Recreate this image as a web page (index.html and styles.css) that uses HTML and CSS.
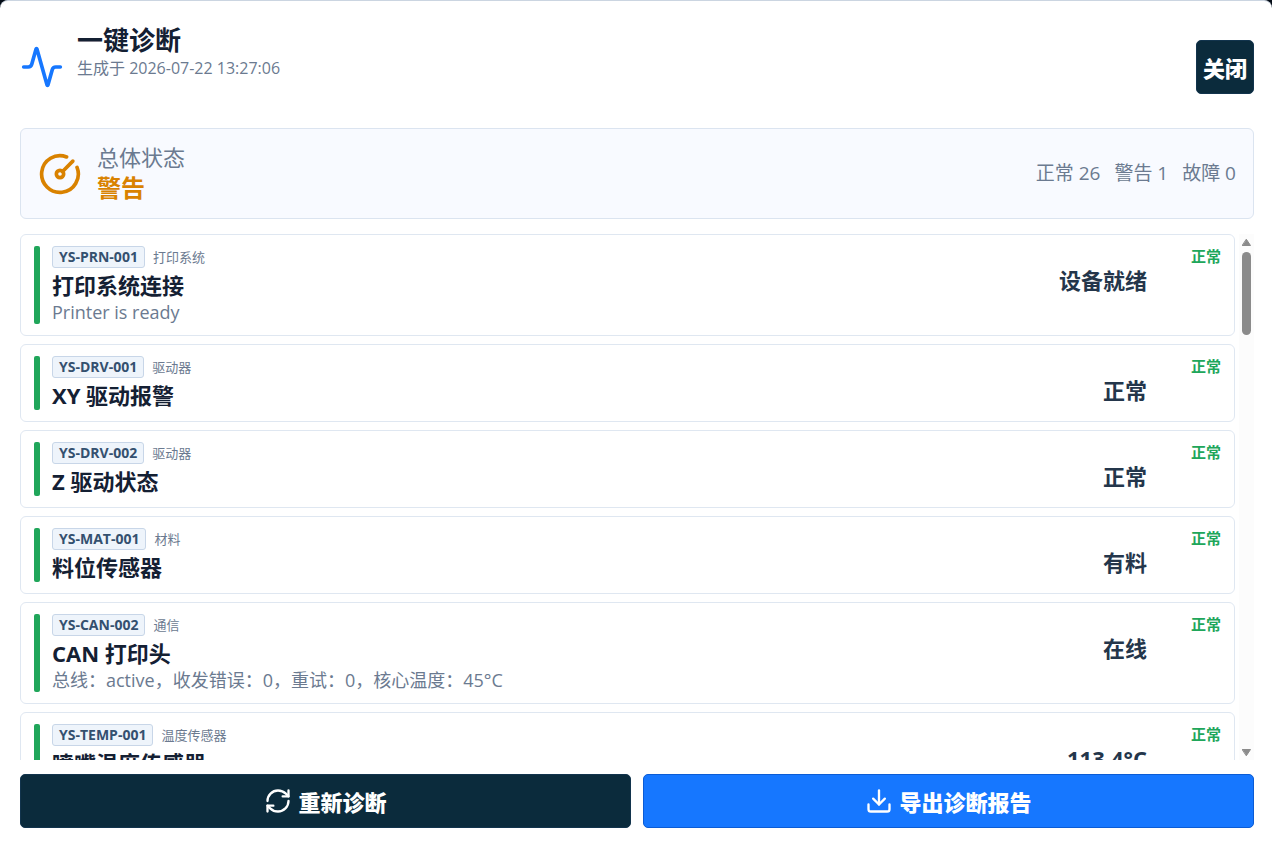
FILE: index.html
```html
<!DOCTYPE html>
<html lang="zh-CN">

<head>
  <meta charset="UTF-8" />
  <meta name="viewport" content="width=device-width, initial-scale=1.0" />
  <title>一键诊断</title>
  <link rel="stylesheet" href="styles.css">
</head>

<body>
  <div class="dialog" role="dialog" aria-labelledby="dialog-title">
    <header class="dialog-header">
      <svg class="icon-lg" viewBox="0 0 24 24">
        <path d="M22 12h-2.48a2 2 0 0 0-1.93 1.46l-2.35 8.36a.25.25 0 0 1-.48 0L9.24 2.18a.25.25 0 0 0-.48 0l-2.35 8.36A2 2 0 0 1 4.49 12H2" />
      </svg>
      <div class="heading">
        <h1 id="dialog-title">一键诊断</h1>
        <p>生成于 2026-07-22 13:27:06</p>
      </div>
      <button class="btn btn-close" type="button">关闭</button>
    </header>

    <section class="summary">
      <svg class="icon-lg" viewBox="0 0 24 24">
        <path d="M15.6 2.7a10 10 0 1 0 5.7 5.7" />
        <circle cx="12" cy="12" r="2" />
        <path d="M13.4 10.6 19 5" />
      </svg>
      <div class="summary-text">
        <p class="summary-label">总体状态</p>
        <p class="summary-value">警告</p>
      </div>
      <div class="counts">
        <span>正常 26</span>
        <span>警告 1</span>
        <span>故障 0</span>
      </div>
    </section>

    <div class="results">
      <ul class="list">
        <li class="item">
          <div class="item-main">
            <div class="meta"><span class="code">YS-PRN-001</span><span class="category">打印系统</span></div>
            <h2>打印系统连接</h2>
            <p>Printer is ready</p>
          </div>
          <strong class="value">设备就绪</strong>
          <span class="status">正常</span>
        </li>
        <li class="item">
          <div class="item-main">
            <div class="meta"><span class="code">YS-DRV-001</span><span class="category">驱动器</span></div>
            <h2>XY 驱动报警</h2>
          </div>
          <strong class="value">正常</strong>
          <span class="status">正常</span>
        </li>
        <li class="item">
          <div class="item-main">
            <div class="meta"><span class="code">YS-DRV-002</span><span class="category">驱动器</span></div>
            <h2>Z 驱动状态</h2>
          </div>
          <strong class="value">正常</strong>
          <span class="status">正常</span>
        </li>
        <li class="item">
          <div class="item-main">
            <div class="meta"><span class="code">YS-MAT-001</span><span class="category">材料</span></div>
            <h2>料位传感器</h2>
          </div>
          <strong class="value">有料</strong>
          <span class="status">正常</span>
        </li>
        <li class="item">
          <div class="item-main">
            <div class="meta"><span class="code">YS-CAN-002</span><span class="category">通信</span></div>
            <h2>CAN 打印头</h2>
            <p>总线：active，收发错误：0，重试：0，核心温度：45°C</p>
          </div>
          <strong class="value">在线</strong>
          <span class="status">正常</span>
        </li>
        <li class="item">
          <div class="item-main">
            <div class="meta"><span class="code">YS-TEMP-001</span><span class="category">温度传感器</span></div>
            <h2>喷嘴温度传感器</h2>
          </div>
          <strong class="value">113.4°C</strong>
          <span class="status">正常</span>
        </li>
      </ul>
      <div class="scrollbar" aria-hidden="true">
        <svg class="arrow" viewBox="0 0 9 7"><path d="M4.5 0.5 8.5 6.5h-8z" /></svg>
        <div class="track"><div class="thumb"></div></div>
        <svg class="arrow" viewBox="0 0 9 7"><path d="M4.5 6.5 8.5 0.5h-8z" /></svg>
      </div>
    </div>

    <footer class="actions">
      <button class="btn" type="button">
        <svg class="icon" viewBox="0 0 24 24">
          <path d="M3 12a9 9 0 0 1 9-9 9.75 9.75 0 0 1 6.74 2.74L21 8" />
          <path d="M21 3v5h-5" />
          <path d="M21 12a9 9 0 0 1-9 9 9.75 9.75 0 0 1-6.74-2.74L3 16" />
          <path d="M8 16H3v5" />
        </svg>
        重新诊断
      </button>
      <button class="btn btn-primary" type="button">
        <svg class="icon" viewBox="0 0 24 24">
          <path d="M12 15V3" />
          <path d="M21 15v4a2 2 0 0 1-2 2H5a2 2 0 0 1-2-2v-4" />
          <path d="m7 10 5 5 5-5" />
        </svg>
        导出诊断报告
      </button>
    </footer>
  </div>
</body>

</html>
```
FILE: styles.css
```css
* {
  box-sizing: border-box;
}

body {
  margin: 0;
  background: #040c16;
  color: #142033;
  font-family: "Open Sans", "Noto Sans CJK SC", sans-serif;
}

h1,
h2,
p,
ul {
  margin: 0;
  padding: 0;
}

svg {
  fill: none;
  stroke: currentColor;
  stroke-width: 2;
  stroke-linecap: round;
  stroke-linejoin: round;
  flex: none;
}

.icon-lg {
  width: 44px;
  height: 44px;
}

.icon {
  width: 28px;
  height: 28px;
}

.dialog {
  display: flex;
  flex-direction: column;
  height: 100vh;
  padding: 22px 18px 17px 20px;
  border-top: 1px solid #cbd5e1;
  border-radius: 8px 8px 0 0;
  background: #fff;
}

/* 头部 */
.dialog-header {
  display: flex;
  align-items: center;
  gap: 13px;
  margin-bottom: 17px;
  color: #1677ff;
}

.heading {
  flex: 1;
  padding-bottom: 32px;
}

.heading h1 {
  font-size: 26px;
  line-height: 34px;
  color: #142033;
}

.heading p {
  font-size: 16px;
  line-height: 22px;
  color: #6b7a90;
}

/* 按钮 */
.btn {
  display: flex;
  flex: 1;
  align-items: center;
  justify-content: center;
  gap: 6px;
  height: 54px;
  padding: 0;
  border: 1px solid #12344d;
  border-radius: 5px;
  background: #0b2b3c;
  color: #fff;
  font-family: inherit;
  font-size: 22px;
  font-weight: 800;
  cursor: pointer;
}

.btn-close {
  flex: none;
  width: 58px;
}

.btn-primary {
  border-color: #0b5cd5;
  background: #1677ff;
}

/* 总体状态 */
.summary {
  display: flex;
  align-items: center;
  gap: 15px;
  margin-bottom: 15px;
  padding: 14px 17px;
  border: 1px solid #dbe4f0;
  border-radius: 6px;
  background: #f8faff;
  color: #d98200;
}

.summary-text {
  flex: 1;
}

.summary-label {
  font-size: 22px;
  line-height: 29px;
  color: #6b7a90;
}

.summary-value {
  font-size: 24px;
  font-weight: 700;
  line-height: 32px;
}

.counts {
  display: flex;
  gap: 14px;
  padding-bottom: 4px;
  font-size: 19px;
  color: #6b7a90;
}

/* 诊断列表 */
.results {
  display: flex;
  flex: 1;
  gap: 4px;
  min-height: 0;
  margin-bottom: 14px;
}

.list {
  display: flex;
  flex: 1;
  flex-direction: column;
  gap: 8px;
  overflow-y: auto;
  scrollbar-width: none;
  list-style: none;
}

.item {
  display: flex;
  flex: none;
  padding: 11px 13px;
  border: 1px solid #dfe7f1;
  border-radius: 6px;
}

.item::before {
  content: "";
  width: 6px;
  margin-right: 12px;
  border-radius: 2px;
  background: #20a65a;
}

.item-main {
  flex: 1;
}

.meta {
  display: flex;
  align-items: center;
  gap: 8px;
  margin-bottom: 3px;
}

.code {
  padding: 0 6px;
  border: 1px solid #c8d6e8;
  border-radius: 3px;
  background: #eef4fb;
  color: #34506f;
  font-size: 14px;
  font-weight: 700;
  line-height: 20px;
}

.category {
  font-size: 13px;
  line-height: 20px;
  color: #6b7a90;
}

.item h2 {
  margin-bottom: 1px;
  font-size: 22px;
  line-height: 28px;
}

.item p {
  font-size: 18px;
  line-height: 24px;
  color: #6b7a90;
}

.value {
  padding-top: 20px;
  font-size: 22px;
  line-height: 28px;
  color: #24364b;
}

.status {
  width: 74px;
  font-size: 15px;
  font-weight: 600;
  line-height: 20px;
  text-align: right;
  color: #20a65a;
}

/* 滚动条 */
.scrollbar {
  display: flex;
  flex-direction: column;
  align-items: center;
  width: 15px;
  padding: 5px 0 4px;
  background: #fcfcfc;
}

.arrow {
  width: 9px;
  height: 7px;
  fill: #8b8b8b;
  stroke: #8b8b8b;
  stroke-width: 1;
}

.track {
  flex: 1;
  width: 9px;
  margin: 6px 0;
}

.thumb {
  height: 17%;
  border-radius: 5px;
  background: #8b8b8b;
}

/* 底部操作 */
.actions {
  display: flex;
  gap: 12px;
}
```
